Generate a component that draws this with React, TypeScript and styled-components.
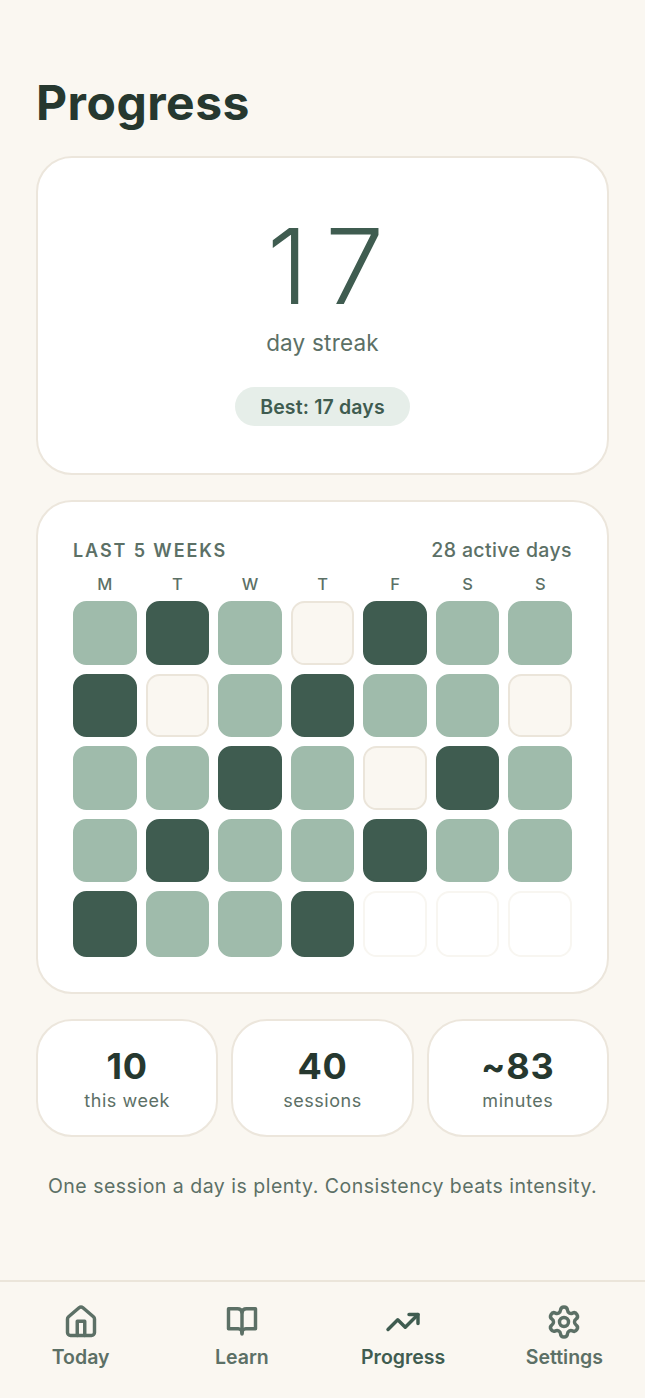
import styled, { createGlobalStyle } from 'styled-components';
import { TrendingUp, Settings } from 'lucide-react';

const GlobalStyle = createGlobalStyle`
  * {
    box-sizing: border-box;
  }
  html, body {
    margin: 0;
    background: #faf7f1;
  }
  body {
    font-family: Inter, 'Liberation Sans', sans-serif;
  }
`;

const Screen = styled.div`
  width: 645px;
  height: 1398px;
  display: flex;
  flex-direction: column;
  background: #faf7f1;
  overflow: hidden;
`;

const Main = styled.main`
  flex: 1;
  display: flex;
  flex-direction: column;
  padding: 72px 36px 0;
`;

const Title = styled.h1`
  margin: 0 0 22px;
  height: 62px;
  font-size: 48px;
  line-height: 62px;
  font-weight: 700;
  letter-spacing: 0.5px;
  color: #26382f;
`;

const Card = styled.section`
  background: #fff;
  border: 2px solid #ece6dc;
  border-radius: 36px;
`;

const StreakCard = styled(Card)`
  height: 319px;
  display: flex;
  flex-direction: column;
  align-items: center;
  padding-top: 55px;
`;

const StreakNumber = styled.div`
  padding-left: 23px;
  font-size: 105px;
  line-height: 105px;
  font-weight: 300;
  letter-spacing: 17px;
  color: #3f5c50;
`;

const StreakLabel = styled.div`
  margin-top: 7px;
  font-size: 22.5px;
  line-height: 36px;
  letter-spacing: 0.2px;
  color: #5c7066;
`;

const BestPill = styled.div`
  margin-top: 26px;
  height: 39px;
  padding: 0 25px;
  display: flex;
  align-items: center;
  border-radius: 20px;
  background: #e6eee9;
  font-size: 19.5px;
  font-weight: 600;
  letter-spacing: 0.15px;
  color: #3f5c50;
`;

const CalendarCard = styled(Card)`
  margin-top: 25px;
  height: 494px;
  padding: 34px 35px 0;
`;

const CalendarHead = styled.div`
  display: flex;
  justify-content: space-between;
  align-items: center;
  height: 28px;
`;

const CalendarTitle = styled.div`
  font-size: 18px;
  font-weight: 600;
  letter-spacing: 1.9px;
  color: #5c7066;
`;

const ActiveDays = styled.div`
  font-size: 19.5px;
  font-weight: 500;
  letter-spacing: 0.38px;
  color: #5c7066;
`;

const Grid = styled.div`
  display: grid;
  grid-template-columns: repeat(7, 1fr);
  column-gap: 9px;
  row-gap: 9px;
  margin-top: 9px;
`;

const DayName = styled.div`
  margin-bottom: -3px;
  height: 22px;
  font-size: 16.5px;
  line-height: 22px;
  font-weight: 500;
  text-align: center;
  color: #5c7066;
`;

type Level = 'light' | 'dark' | 'off' | 'future';

const tileBackground: Record<Level, string> = {
  light: '#9fbbab',
  dark: '#3f5c50',
  off: '#faf7f1',
  future: '#fff',
};

const tileBorder: Record<Level, string> = {
  light: '#9fbbab',
  dark: '#3f5c50',
  off: '#ebe5da',
  future: '#f8f6f1',
};

const Tile = styled.div<{ $level: Level; $tall?: boolean }>`
  aspect-ratio: ${p => (p.$tall ? '64 / 66' : '1')};
  border-radius: 13.5px;
  background: ${p => tileBackground[p.$level]};
  border: 2px solid ${p => tileBorder[p.$level]};
`;

const StatRow = styled.div`
  margin-top: 25px;
  display: grid;
  grid-template-columns: repeat(3, 1fr);
  gap: 13px;
`;

const StatCard = styled(Card)`
  height: 118px;
  display: flex;
  flex-direction: column;
  align-items: center;
  padding-top: 24px;
`;

const StatValue = styled.div`
  font-size: 36px;
  line-height: 42px;
  font-weight: 700;
  letter-spacing: 0.8px;
  color: #26382f;
`;

const StatLabel = styled.div`
  margin-top: 2px;
  font-size: 18px;
  line-height: 24px;
  letter-spacing: 0.55px;
  color: #5c7066;
`;

const Footnote = styled.p`
  margin: 36px 0 0;
  font-size: 19.5px;
  line-height: 26px;
  letter-spacing: 0.5px;
  text-align: center;
  color: #5c7066;
`;

const Nav = styled.nav`
  height: 118px;
  display: grid;
  grid-template-columns: repeat(4, 1fr);
  padding: 22px 0 0;
  border-top: 2px solid #ebe5da;
`;

const NavItem = styled.div<{ $active?: boolean }>`
  display: flex;
  flex-direction: column;
  align-items: center;
  gap: 4px;
  color: ${p => (p.$active ? '#3f5c50' : '#5c7066')};
  font-size: 19.5px;
  line-height: 26px;
  font-weight: 600;
`;

const NavSvg = styled.svg.attrs({
  width: 36,
  height: 36,
  viewBox: '0 0 24 24',
  fill: 'none',
  stroke: 'currentColor',
  strokeWidth: 2.3,
  strokeLinecap: 'round',
  strokeLinejoin: 'round',
})``;

const HomeIcon = () => (
  <NavSvg>
    <path d="M3 10a2 2 0 0 1 .7-1.5l7-6a2 2 0 0 1 2.6 0l7 6A2 2 0 0 1 21 10v9a2 2 0 0 1-2 2H5a2 2 0 0 1-2-2z" />
    <path d="M9.5 21v-9.5h5V21" />
  </NavSvg>
);

const BookIcon = () => (
  <NavSvg>
    <path d="M3 3.2h6a3 3 0 0 1 3 2.5 3 3 0 0 1 3-2.5h6v13.3h-6.5c-1.3 0-2.5 1-2.5 2.8 0-1.8-1.2-2.8-2.5-2.8H3z" />
    <path d="M12 5.7V20" />
  </NavSvg>
);

const weeks: Level[][] = [
  ['light', 'dark', 'light', 'off', 'dark', 'light', 'light'],
  ['dark', 'off', 'light', 'dark', 'light', 'light', 'off'],
  ['light', 'light', 'dark', 'light', 'off', 'dark', 'light'],
  ['light', 'dark', 'light', 'light', 'dark', 'light', 'light'],
  ['dark', 'light', 'light', 'dark', 'future', 'future', 'future'],
];

const days = ['M', 'T', 'W', 'T', 'F', 'S', 'S'];

const stats = [
  { value: '10', label: 'this week' },
  { value: '40', label: 'sessions' },
  { value: '~83', label: 'minutes' },
];

const App = () => (
  <Screen>
    <GlobalStyle />
    <Main>
      <Title>Progress</Title>
      <StreakCard>
        <StreakNumber>17</StreakNumber>
        <StreakLabel>day streak</StreakLabel>
        <BestPill>Best: 17 days</BestPill>
      </StreakCard>
      <CalendarCard>
        <CalendarHead>
          <CalendarTitle>LAST 5 WEEKS</CalendarTitle>
          <ActiveDays>28 active days</ActiveDays>
        </CalendarHead>
        <Grid>
          {days.map((d, i) => (
            <DayName key={i}>{d}</DayName>
          ))}
          {weeks.map((week, w) =>
            week.map((level, i) => <Tile key={`${w}-${i}`} $level={level} $tall={w === 4} />),
          )}
        </Grid>
      </CalendarCard>
      <StatRow>
        {stats.map(s => (
          <StatCard key={s.label}>
            <StatValue>{s.value}</StatValue>
            <StatLabel>{s.label}</StatLabel>
          </StatCard>
        ))}
      </StatRow>
      <Footnote>One session a day is plenty. Consistency beats intensity.</Footnote>
    </Main>
    <Nav>
      <NavItem>
        <HomeIcon />
        Today
      </NavItem>
      <NavItem>
        <BookIcon />
        Learn
      </NavItem>
      <NavItem $active>
        <TrendingUp size={36} strokeWidth={2.3} />
        Progress
      </NavItem>
      <NavItem>
        <Settings size={36} strokeWidth={2.3} />
        Settings
      </NavItem>
    </Nav>
  </Screen>
);

export default App;
